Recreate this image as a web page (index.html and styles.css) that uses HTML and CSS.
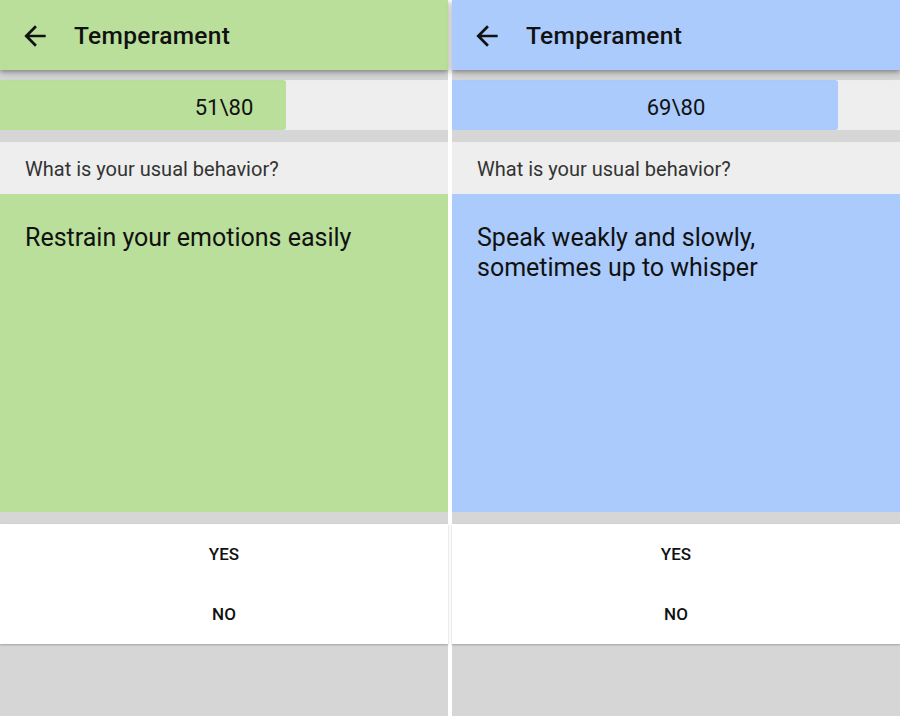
FILE: index.html
```html
<!DOCTYPE html>
<html>
<head>
<meta charset="utf-8">
<link rel="stylesheet" href="styles.css">
</head>
<body>
<div class="screens">
  <div class="screen green">
    <header class="appbar">
      <svg class="back" viewBox="0 0 24 24" width="32" height="32"><path d="M20 11H7.83l5.59-5.59L12 4l-8 8 8 8 1.41-1.41L7.83 13H20v-2z" fill="#111"/></svg>
      <h1 class="title">Temperament</h1>
    </header>
    <div class="progress">
      <div class="fill" style="width:63.75%"></div>
      <span class="count">51\80</span>
    </div>
    <div class="question">What is your usual behavior?</div>
    <div class="answer">Restrain your emotions easily</div>
    <div class="buttons">
      <button class="btn">YES</button>
      <button class="btn">NO</button>
    </div>
  </div>
  <div class="screen blue">
    <header class="appbar">
      <svg class="back" viewBox="0 0 24 24" width="32" height="32"><path d="M20 11H7.83l5.59-5.59L12 4l-8 8 8 8 1.41-1.41L7.83 13H20v-2z" fill="#111"/></svg>
      <h1 class="title">Temperament</h1>
    </header>
    <div class="progress">
      <div class="fill" style="width:86.25%"></div>
      <span class="count">69\80</span>
    </div>
    <div class="question">What is your usual behavior?</div>
    <div class="answer">Speak weakly and slowly,<br>sometimes up to whisper</div>
    <div class="buttons">
      <button class="btn">YES</button>
      <button class="btn">NO</button>
    </div>
  </div>
</div>
</body>
</html>
```
FILE: styles.css
```css
html, body {
  margin: 0;
  padding: 0;
  background: #ffffff;
}
body {
  font-family: Roboto, "Liberation Sans", sans-serif;
  width: 900px;
  height: 716px;
  overflow: hidden;
}
.screens {
  display: flex;
  gap: 4px;
  height: 716px;
}
.screen {
  width: 448px;
  height: 716px;
  background: #d6d6d6;
  display: flex;
  flex-direction: column;
}
.green { --accent: #b9df9b; }
.blue { --accent: #aacbfc; }
.appbar {
  height: 70px;
  background: var(--accent);
  display: flex;
  align-items: center;
  padding-left: 19px;
  padding-top: 1px;
  box-sizing: border-box;
  box-shadow: 0 2px 4px rgba(0,0,0,0.28), 0 4px 8px rgba(0,0,0,0.12);
  position: relative;
  z-index: 2;
  flex-shrink: 0;
}
.back {
  display: block;
}
.title {
  margin: 0 0 0 23px;
  font-size: 24.5px;
  font-weight: 500;
  color: #111;
  letter-spacing: 0.3px;
}
.progress {
  margin-top: 10px;
  height: 50px;
  background: #eeeeee;
  position: relative;
  flex-shrink: 0;
}
.fill {
  height: 100%;
  background: var(--accent);
  border-radius: 0 3px 3px 0;
}
.count {
  position: absolute;
  left: 0;
  right: 0;
  top: 0;
  line-height: 55px;
  text-align: center;
  font-size: 22px;
  color: #111;
}
.question {
  margin-top: 12px;
  height: 52px;
  background: #eeeeee;
  padding-left: 25px;
  line-height: 54px;
  font-size: 20px;
  color: #333;
  flex-shrink: 0;
}
.answer {
  height: 318px;
  box-sizing: border-box;
  background: var(--accent);
  padding: 29px 25px 0;
  font-size: 25px;
  line-height: 30px;
  color: #111;
  flex-shrink: 0;
}
.buttons {
  margin-top: 12px;
  display: flex;
  flex-direction: column;
  background: #fff;
  box-shadow: 0 1px 2px rgba(0,0,0,0.25);
}
.btn {
  height: 60px;
  border: none;
  background: #fff;
  font-family: Roboto, "Liberation Sans", sans-serif;
  font-size: 17px;
  font-weight: 500;
  color: #111;
  padding: 0;
}
```
